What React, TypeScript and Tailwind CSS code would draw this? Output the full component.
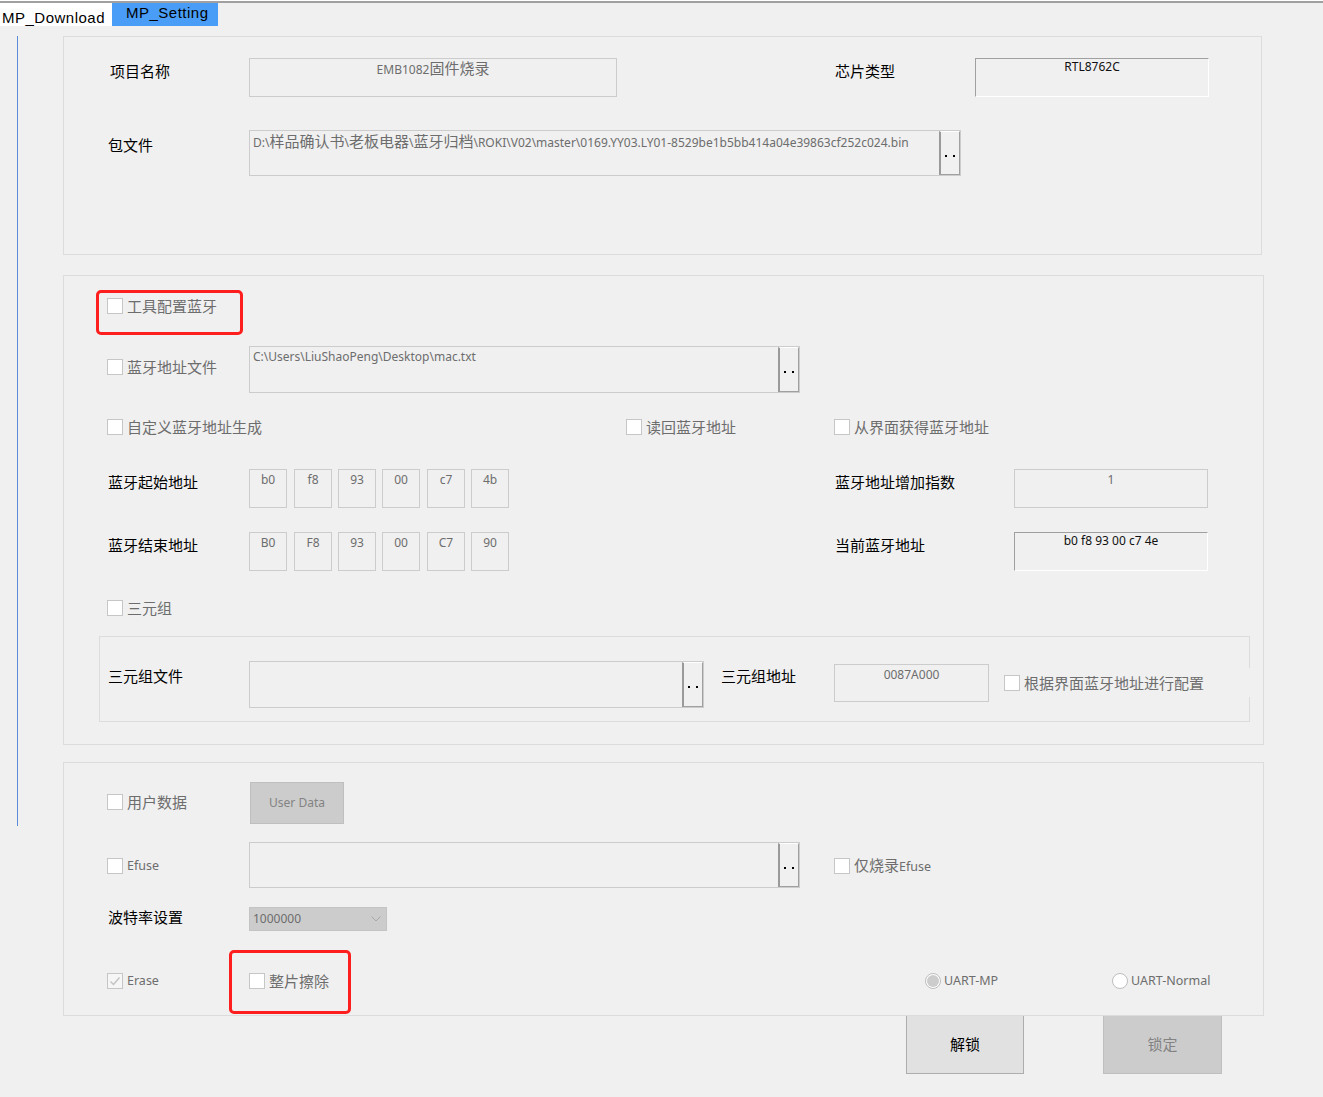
import React from 'react';

// MP_Setting 页面：三个分组框 + 底部按钮

const cjkRe = /([\u3400-\u9fff]+)/;

function Mixed({ text }: { text: string }) {
  const parts = text.split(cjkRe);
  return (
    <>
      {parts.map((p, i) =>
        cjkRe.test(p) ? (
          <span key={i} className="font-['Noto_Sans_CJK_SC',sans-serif] text-[15px] leading-[16px]">
            {p}
          </span>
        ) : (
          <React.Fragment key={i}>{p}</React.Fragment>
        )
      )}
    </>
  );
}

function Label({ children, className = '' }: { children: React.ReactNode; className?: string }) {
  return <div className={`shrink-0 whitespace-nowrap text-[15px] leading-[20px] text-black ${className}`}>{children}</div>;
}

function Browse() {
  return (
    <div className="shrink-0 w-[21px] flex items-center justify-center gap-[6px] pt-[5px] border-l-2 border-l-[#9a9a9a] border-r border-r-[#a0a0a0] border-b border-b-[#a0a0a0] border-t border-t-white">
      <span className="w-[2px] h-[2px] bg-black" />
      <span className="w-[2px] h-[2px] bg-black" />
    </div>
  );
}

interface FieldProps {
  className?: string;
  sunken?: boolean;
  dark?: boolean;
  center?: boolean;
  browse?: boolean;
  text?: string;
  textClass?: string;
}

function Field({ className = '', sunken = false, dark = false, center = false, browse = false, text = '', textClass = 'pt-[2px]' }: FieldProps) {
  const edge = sunken
    ? 'border-t border-l border-t-[#a0a0a0] border-l-[#a0a0a0] border-b border-r border-b-white border-r-white'
    : 'border border-[#cccccc]';
  return (
    <div className={`shrink-0 flex ${edge} ${className}`}>
      <div
        className={`flex-1 min-w-0 whitespace-nowrap px-[3px] font-['Noto_Sans','Noto_Sans_CJK_SC',sans-serif] text-[12px] leading-[16px] ${
          dark ? 'text-[#111111]' : 'text-[#6d6d6d]'
        } ${center ? 'text-center' : ''} ${textClass}`}
      >
        <Mixed text={text} />
      </div>
      {browse && <Browse />}
    </div>
  );
}

function Check({
  label,
  checked = false,
  latin = false,
  className = '',
}: {
  label: React.ReactNode;
  checked?: boolean;
  latin?: boolean;
  className?: string;
}) {
  return (
    <div className={`shrink-0 flex items-center h-[20px] ${className}`}>
      <span
        className={`w-[16px] h-[16px] shrink-0 border border-[#c6c6c6] flex items-center justify-center ${
          checked ? 'bg-[#f6f6f6]' : 'bg-white'
        }`}
      >
        {checked && (
          <svg width="12" height="12" viewBox="0 0 12 12">
            <polyline points="1.5,6.5 4.5,9.5 10.5,2.5" fill="none" stroke="#c2c2c2" strokeWidth="1.4" />
          </svg>
        )}
      </span>
      <span
        className={`ml-[4px] whitespace-nowrap text-[#6d6d6d] leading-[20px] ${
          latin ? "font-['Noto_Sans',sans-serif] text-[12.5px]" : 'text-[15px]'
        }`}
      >
        {label}
      </span>
    </div>
  );
}

function Radio({ label, checked = false, className = '' }: { label: string; checked?: boolean; className?: string }) {
  return (
    <div className={`shrink-0 flex items-center h-[20px] ${className}`}>
      <span className="w-[16px] h-[16px] shrink-0 rounded-full border border-[#bdbdbd] bg-white flex items-center justify-center">
        {checked && <span className="w-[12px] h-[12px] rounded-full bg-[#cccccc]" />}
      </span>
      <span className="ml-[3px] whitespace-nowrap font-['Noto_Sans',sans-serif] text-[12.5px] leading-[20px] text-[#6d6d6d]">
        {label}
      </span>
    </div>
  );
}

function AddrRow({ label, values, sideLabel, sideText, sideSunken }: { label: string; values: string[]; sideLabel: string; sideText: string; sideSunken?: boolean }) {
  const gaps = ['', 'ml-[7px]', 'ml-[6px]', 'ml-[6px]', 'ml-[7px]', 'ml-[6px]'];
  return (
    <div className="flex items-start">
      <Label className="ml-[44px] mt-[3px] w-[141px]">{label}</Label>
      {values.map((v, i) => (
        <Field key={i} className={`w-[38px] h-[39px] ${gaps[i]}`} center text={v} />
      ))}
      <Label className="ml-[326px] mt-[3px] w-[179px]">{sideLabel}</Label>
      {sideSunken ? (
        <Field className="w-[194px] h-[39px]" sunken dark center text={sideText} textClass="pt-0" />
      ) : (
        <Field className="w-[194px] h-[39px]" center text={sideText} />
      )}
    </div>
  );
}

export default function App() {
  return (
    <div className="w-[1323px] h-[1097px] bg-[#f0f0f0] overflow-hidden font-['Noto_Sans_CJK_SC',sans-serif]">
      <div className="h-[1px] bg-white" />
      <div className="h-[2px] bg-[#a0a0a0]" />

      {/* 选项卡 */}
      <div className="flex h-[23px] font-['Liberation_Sans',sans-serif] text-[15px] tracking-[0.5px] text-black">
        <div className="w-[112px] bg-white pl-[2px] pt-[6px] leading-[18px]">MP_Download</div>
        <div className="w-[106px] bg-[#4a9df6] pl-[14px] pt-[1px] leading-[18px]">MP_Setting</div>
      </div>

      <div className="flex">
        <div className="ml-[17px] mt-[10px] w-[1px] h-[790px] bg-[#5b8bd9]" />

        <div className="ml-[45px] mt-[10px] flex flex-col">
          {/* 分组 1 */}
          <div className="shrink-0 w-[1199px] h-[219px] border border-[#dcdcdc]">
            <div className="flex items-start mt-[21px]">
              <Label className="ml-[46px] mt-[3px] w-[139px]">项目名称</Label>
              <Field className="w-[368px] h-[39px]" center text="EMB1082固件烧录" textClass="pt-[1px]" />
              <Label className="ml-[218px] mt-[3px] w-[140px]">芯片类型</Label>
              <Field className="w-[234px] h-[39px]" sunken dark center text="RTL8762C" textClass="pt-0" />
            </div>
            <div className="flex items-start mt-[33px]">
              <Label className="ml-[44px] mt-[5px] w-[141px]">包文件</Label>
              <Field
                className="w-[712px] h-[46px]"
                browse
                text={'D:\\样品确认书\\老板电器\\蓝牙归档\\ROKI\\V02\\master\\0169.YY03.LY01-8529be1b5bb414a04e39863cf252c024.bin'}
              />
            </div>
          </div>

          {/* 分组 2 */}
          <div className="relative shrink-0 mt-[20px] w-[1201px] h-[470px] border border-[#dcdcdc]">
            <div className="absolute left-[32px] top-[14px] w-[147px] h-[45px] border-[3px] border-[#ff1e1e] rounded-[5px]" />

            <Check className="ml-[43px] mt-[20px]" label="工具配置蓝牙" />

            <div className="flex items-start mt-[30px]">
              <Check className="ml-[43px] mt-[11px] w-[142px]" label="蓝牙地址文件" />
              <Field className="w-[551px] h-[47px]" browse text={'C:\\Users\\LiuShaoPeng\\Desktop\\mac.txt'} />
            </div>

            <div className="flex mt-[24px]">
              <Check className="ml-[43px] w-[519px]" label="自定义蓝牙地址生成" />
              <Check className="w-[208px]" label="读回蓝牙地址" />
              <Check label="从界面获得蓝牙地址" />
            </div>

            <div className="mt-[32px]">
              <AddrRow label="蓝牙起始地址" values={['b0', 'f8', '93', '00', 'c7', '4b']} sideLabel="蓝牙地址增加指数" sideText="1" />
            </div>
            <div className="mt-[24px]">
              <AddrRow label="蓝牙结束地址" values={['B0', 'F8', '93', '00', 'C7', '90']} sideLabel="当前蓝牙地址" sideText="b0 f8 93 00 c7 4e" sideSunken />
            </div>

            <Check className="ml-[43px] mt-[27px]" label="三元组" />

            <div className="ml-[35px] mt-[18px] w-[1151px] h-[86px] border border-[#dcdcdc]">
              <div className="flex items-start mt-[24px]">
                <Label className="ml-[8px] mt-[5px] w-[141px]">三元组文件</Label>
                <Field className="w-[455px] h-[47px]" browse />
                <Label className="ml-[17px] mt-[5px] w-[113px]">三元组地址</Label>
                <Field className="mt-[3px] w-[155px] h-[38px]" center text="0087A000" />
                <div className="shrink-0 ml-[15px] mt-[7px] w-[252px] h-[29px] bg-[#f0f0f0] flex items-center">
                  <Check label="根据界面蓝牙地址进行配置" />
                </div>
              </div>
            </div>
          </div>

          {/* 分组 3 */}
          <div className="relative shrink-0 mt-[17px] w-[1201px] h-[254px] border border-[#dcdcdc]">
            <div className="absolute left-[165px] top-[187px] w-[122px] h-[64px] border-[3px] border-[#ff1e1e] rounded-[5px]" />

            <div className="flex items-start mt-[19px]">
              <Check className="ml-[43px] mt-[10px] w-[143px]" label="用户数据" />
              <div className="shrink-0 w-[94px] h-[42px] bg-[#cccccc] border border-[#bfbfbf] flex items-center justify-center font-['Noto_Sans',sans-serif] text-[12px] text-[#838383]">
                User Data
              </div>
            </div>

            <div className="flex items-start mt-[18px]">
              <Check className="ml-[43px] mt-[14px] w-[142px]" latin label="Efuse" />
              <Field className="w-[551px] h-[46px]" browse />
              <Check
                className="ml-[34px] mt-[14px]"
                label={
                  <>
                    仅烧录<span className="font-['Noto_Sans',sans-serif] text-[12.5px]">Efuse</span>
                  </>
                }
              />
            </div>

            <div className="flex items-start mt-[19px]">
              <Label className="ml-[44px] w-[141px]">波特率设置</Label>
              <div className="shrink-0 w-[138px] h-[24px] bg-[#cccccc] border border-[#c4c4c4] flex items-center justify-between pl-[3px] pr-[5px]">
                <span className="font-['Noto_Sans',sans-serif] text-[12px] text-[#6d6d6d]">1000000</span>
                <svg width="10" height="6" viewBox="0 0 10 6">
                  <polyline points="0.5,0.5 5,5 9.5,0.5" fill="none" stroke="#a8a8a8" strokeWidth="1" />
                </svg>
              </div>
            </div>

            <div className="flex items-center mt-[40px]">
              <Check className="ml-[43px] w-[142px]" checked latin label="Erase" />
              <Check className="w-[676px]" label="整片擦除" />
              <Radio className="w-[187px]" checked label="UART-MP" />
              <Radio label="UART-Normal" />
            </div>
          </div>

          {/* 底部按钮 */}
          <div className="flex -mt-[1px]">
            <div className="shrink-0 ml-[843px] w-[118px] h-[59px] bg-[#e1e1e1] border border-[#adadad] flex items-center justify-center text-[15px] text-black">
              解锁
            </div>
            <div className="shrink-0 ml-[79px] w-[119px] h-[59px] bg-[#cccccc] border border-[#bfbfbf] flex items-center justify-center text-[15px] text-[#838383]">
              锁定
            </div>
          </div>
        </div>
      </div>
    </div>
  );
}
